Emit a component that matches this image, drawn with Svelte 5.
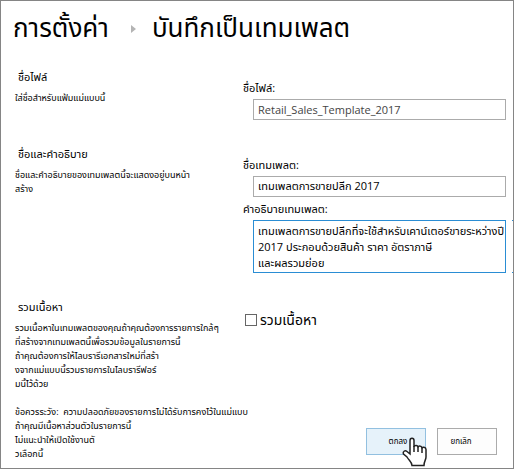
<script>
  let fileName = $state('Retail_Sales_Template_2017');
  let templateName = $state('เทมเพลตการขายปลีก 2017');
  let description = $state(
    'เทมเพลตการขายปลีกที่จะใช้สำหรับเคาน์เตอร์ขายระหว่างปี\n2017 ประกอบด้วยสินค้า ราคา อัตราภาษี\nและผลรวมย่อย'
  );
  let includeContent = $state(false);

  const nameHelp = ['ชื่อและคำอธิบายของเทมเพลตนี้จะแสดงอยู่บนหน้า', 'สร้าง'];
  const contentHelp = [
    'รวมเนื้อหาในเทมเพลตของคุณถ้าคุณต้องการรายการใกล้ๆ',
    'ที่สร้างจากเทมเพลตนี้เพื่อรวมข้อมูลในรายการนี้',
    'ถ้าคุณต้องการให้ไลบรารีเอกสารใหม่ที่สร้า',
    'งจากแม่แบบนี้รวมรายการในไลบรารีฟอร์',
    'มนี้ไว้ด้วย'
  ];
  const caution = [
    'ข้อควรระวัง:  ความปลอดภัยของรายการไม่ได้รับการคงไว้ในแม่แบบ',
    'ถ้าคุณมีเนื้อหาส่วนตัวในรายการนี้',
    'ไม่แนะนำให้เปิดใช้งานตั',
    'วเลือกนี้'
  ];
</script>

<main>
  <h1>
    <a href="#settings">การตั้งค่า</a>
    <svg class="arrow" viewBox="0 0 5 8" aria-hidden="true"><path d="M0 0 5 4 0 8z" /></svg>
    <span>บันทึกเป็นเทมเพลต</span>
  </h1>

  <form onsubmit={(e) => e.preventDefault()}>
    <section class="file">
      <div class="info">
        <h2>ชื่อไฟล์</h2>
        <p>ใส่ชื่อสำหรับแฟ้มแม่แบบนี้</p>
      </div>
      <div class="fields">
        <label for="file">ชื่อไฟล์:</label>
        <input id="file" class="muted" type="text" bind:value={fileName} />
      </div>
    </section>

    <section class="naming">
      <div class="info">
        <h2>ชื่อและคำอธิบาย</h2>
        <p>{nameHelp.join('\n')}</p>
      </div>
      <div class="fields">
        <label for="name">ชื่อเทมเพลต:</label>
        <input id="name" type="text" bind:value={templateName} />
        <label for="desc">คำอธิบายเทมเพลต:</label>
        <div class="area">
          <textarea id="desc" rows="3" bind:value={description}></textarea>
          <span class="edge"></span>
        </div>
      </div>
    </section>

    <section class="content">
      <div class="info">
        <h2>รวมเนื้อหา</h2>
        <p>{contentHelp.join('\n')}</p>
        <p class="caution">{caution.join('\n')}</p>
      </div>
      <div class="fields">
        <label class="check">
          <input type="checkbox" bind:checked={includeContent} />
          <span>รวมเนื้อหา</span>
        </label>
        <div class="actions">
          <button class="primary" type="submit">
            ตกลง
            <svg class="hand" viewBox="0 0 26 30" aria-hidden="true">
              <path
                d="M8 17V3.500C8 .5 12 .5 12 3.500V10c0-2 4-2 4 .5 0-2 4-2 4 1 0-2 4-1.500 4 1V20c0 3-2 4-2 8.500H10c0-3.500-3-5-5-8.500L1.500 17C.5 14.500 3 13 5 14.500z"
              />
              <path d="M12 9v6M16 10v5M20 11v5" />
            </svg>
          </button>
          <button type="button">ยกเลิก</button>
        </div>
      </div>
    </section>
  </form>
</main>

<style>
  :global(body) {
    margin: 0;
    background: #fff;
  }
  main {
    box-sizing: border-box;
    min-height: 100vh;
    border: 1px solid #858585;
    color: #000;
    font-family: 'Open Sans', 'Noto Sans', 'Noto Sans Thai', sans-serif;
    overflow: hidden;
  }
  h1 {
    display: flex;
    align-items: center;
    margin: 0;
    padding: 6px 12px 0;
    height: 40px;
    font-size: 26px;
    font-weight: 400;
    line-height: 40px;
    white-space: nowrap;
  }
  h1 a {
    color: inherit;
    text-decoration: none;
  }
  .arrow {
    width: 5px;
    height: 8px;
    margin: 4px 16px 0 22px;
    fill: #b4b4b4;
  }
  form {
    padding: 20px 7px 0 14px;
  }
  section {
    display: grid;
    grid-template-columns: 228px 1fr;
  }
  .file {
    min-height: 77px;
  }
  .naming {
    min-height: 153px;
  }
  h2 {
    margin: 0 0 4px;
    padding-left: 3px;
    font-size: 11px;
    font-weight: 400;
    line-height: 20px;
  }
  p {
    margin: 0;
    font-size: 9px;
    line-height: 14px;
    white-space: pre;
  }
  .caution {
    margin-top: 14px;
  }
  .fields {
    display: flex;
    flex-direction: column;
    font-size: 11px;
    line-height: 16px;
  }
  .file .fields,
  .naming .fields {
    padding-top: 13px;
  }
  .fields > label:not(.check) {
    height: 19px;
  }
  input[type='text'],
  textarea {
    box-sizing: border-box;
    width: 100%;
    margin: 0;
    border: 1px solid #ababab;
    border-radius: 0;
    padding: 0 4px;
    background: #fff;
    color: #000;
    font: inherit;
    outline: none;
  }
  input[type='text'] {
    width: auto;
    height: 21px;
    margin: 0 0 4px 10px;
  }
  input.muted {
    color: #444;
  }
  .area {
    position: relative;
    margin-left: 10px;
  }
  textarea {
    display: block;
    height: 53px;
    border-color: #2a8dd4;
    padding-top: 2px;
    resize: none;
    overflow: hidden;
    white-space: pre;
  }
  .edge {
    position: absolute;
    top: 0;
    bottom: 0;
    right: -7px;
    width: 1px;
    box-sizing: border-box;
    border: solid #2a8dd4;
    border-width: 1px 0;
  }
  .check {
    display: flex;
    align-items: center;
    gap: 3px;
    margin-top: 12px;
    padding-left: 2px;
    font-size: 14px;
    line-height: 22px;
  }
  .check input {
    appearance: none;
    box-sizing: border-box;
    width: 12px;
    height: 12px;
    margin: 0;
    border: 1px solid #666;
    background: #fff;
  }
  .check input:checked {
    background: #2a8dd4;
  }
  .content .fields {
    justify-content: space-between;
  }
  .actions {
    display: flex;
    justify-content: flex-end;
    gap: 11px;
    padding-right: 9px;
    padding-bottom: 6px;
  }
  button {
    position: relative;
    width: 60px;
    height: 27px;
    border: 1px solid #ababab;
    padding: 0 12px 0 0;
    background: #fdfdfd;
    color: #000;
    font: 8px 'Open Sans', 'Noto Sans Thai', sans-serif;
    white-space: nowrap;
  }
  .primary {
    border-color: #92c0e0;
    padding: 0 0 0 4px;
    background: #e6f2fa;
  }
  .hand {
    position: absolute;
    top: 8px;
    left: 35px;
    width: 26px;
    height: 30px;
    fill: #fff;
    stroke: #222;
    stroke-width: 1.5;
  }
</style>
